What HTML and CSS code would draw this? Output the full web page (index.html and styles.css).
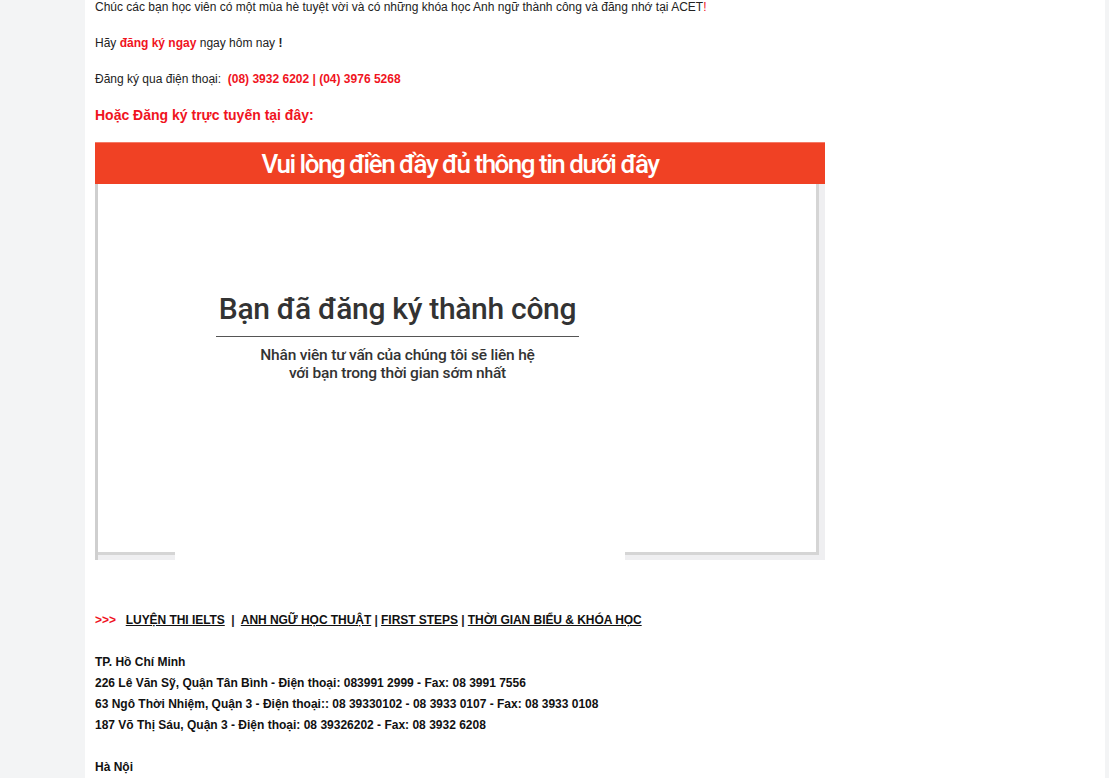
FILE: index.html
```html
<!DOCTYPE html>
<html lang="vi">
<head>
<meta charset="utf-8">
<title>ACET - Đăng ký</title>
<link rel="stylesheet" href="styles.css">
</head>
<body>
<div class="page">
  <div class="content">
    <p class="line">Chúc các bạn học viên có một mùa hè tuyệt vời và có những khóa học Anh ngữ thành công và đăng nhớ tại ACET<span class="red">!</span></p>
    <p class="line">Hãy <b class="red">đăng ký ngay</b> ngay hôm nay <b>!</b></p>
    <p class="line">Đăng ký qua điện thoại:&nbsp; <b class="red">(08) 3932 6202 | (04) 3976 5268</b></p>
    <p class="line lead red">Hoặc Đăng ký trực tuyến tại đây:</p>

    <div class="form">
      <div class="form-head">Vui lòng điền đầy đủ thông tin dưới đây</div>
      <div class="form-body">
        <div class="stage">
          <div class="stage-main">
            <div class="canvas">
              <div class="message">
                <div class="msg-title">Bạn đã đăng ký thành công</div>
                <div class="msg-text">Nhân viên tư vấn của chúng tôi sẽ liên hệ<br>với bạn trong thời gian sớm nhất</div>
              </div>
            </div>
            <div class="edge"></div>
          </div>
          <div class="stage-foot">
            <div class="foot-left"></div>
            <div class="foot-gap"></div>
            <div class="foot-right"><div class="foot-line"></div></div>
          </div>
        </div>
      </div>
    </div>

    <p class="nav"><span class="red arrows">&gt;&gt;&gt;</span>&nbsp;&nbsp; <a href="#">LUYỆN THI IELTS</a>&nbsp; |&nbsp; <a href="#">ANH NGỮ HỌC THUẬT</a> | <a href="#">FIRST STEPS</a> | <a href="#">THỜI GIAN BIỂU &amp; KHÓA HỌC</a></p>

    <div class="address">
      <p>TP. Hồ Chí Minh</p>
      <p>226 Lê Văn Sỹ, Quận Tân Bình - Điện thoại: 083991 2999 - Fax: 08 3991 7556</p>
      <p>63 Ngô Thời Nhiệm, Quận 3 - Điện thoại:: 08 39330102 - 08 3933 0107 - Fax: 08 3933 0108</p>
      <p>187 Võ Thị Sáu, Quận 3 - Điện thoại: 08 39326202 - Fax: 08 3932 6208</p>
      <p class="gap">Hà Nội</p>
    </div>
  </div>
</div>
</body>
</html>
```

FILE: styles.css
```css
html, body {
  margin: 0;
  padding: 0;
}
body {
  background: #f3f4f5;
  font-family: "Liberation Sans", Arial, sans-serif;
  font-size: 12px;
  color: #222;
  overflow: hidden;
}
.page {
  display: flow-root;
  margin-left: 85px;
  width: 1020px;
  min-height: 100vh;
  background: #fff;
}
.content {
  padding-left: 10px;
  margin-top: -2px;
}
.line {
  margin: 0 0 18px;
  line-height: 18px;
}
.red {
  color: #f0141e;
}
.lead {
  font-size: 14px;
  font-weight: bold;
  margin-bottom: 18px;
}
.form {
  width: 730px;
}
.form-head {
  height: 42px;
  background: #f04124;
  border-top: 1px solid #f47a66;
  box-sizing: border-box;
  color: #fff;
  font-family: Roboto, "Liberation Sans", sans-serif;
  font-size: 26px;
  font-weight: 500;
  letter-spacing: -1.5px;
  line-height: 42px;
  text-align: center;
}
.form-body {
  display: flex;
  border-left: 3px solid #cfcfcf;
  height: 376px;
}
.stage {
  flex: 1;
  display: flex;
  flex-direction: column;
}
.stage-main {
  height: 368px;
  display: flex;
}
.canvas {
  flex: 1;
  background: #fff;
}
.edge {
  width: 6px;
  border-left: 3px solid #d5d5d5;
  background: #efeff1;
}
.stage-foot {
  height: 8px;
  display: flex;
}
.foot-left {
  width: 77px;
  border-top: 3px solid #d5d5d5;
  background: #efeff1;
}
.foot-gap {
  width: 450px;
  background: #fff;
}
.foot-right {
  flex: 1;
  display: flex;
  background: #efeff1;
}
.foot-line {
  width: 194px;
  border-top: 3px solid #d5d5d5;
}
.message {
  width: 363px;
  margin: 107px 0 0 118px;
  text-align: center;
  color: #333;
  font-family: Roboto, "Liberation Sans", sans-serif;
}
.msg-title {
  font-size: 30px;
  font-weight: 500;
  line-height: 36px;
  padding-bottom: 9px;
  border-bottom: 1px solid #555;
  letter-spacing: -0.3px;
}
.msg-text {
  font-size: 15.5px;
  font-weight: 500;
  line-height: 18px;
  margin-top: 9px;
  letter-spacing: -0.2px;
}
.nav {
  margin: 50px 0 0;
  line-height: 21px;
  font-weight: bold;
  letter-spacing: -0.05px;
}
.nav a {
  color: #111;
  text-decoration: underline;
}
.address {
  margin-top: 21px;
  font-weight: bold;
  line-height: 21px;
  color: #111;
}
.address p {
  margin: 0;
}
.address .gap {
  margin-top: 21px;
}
```
